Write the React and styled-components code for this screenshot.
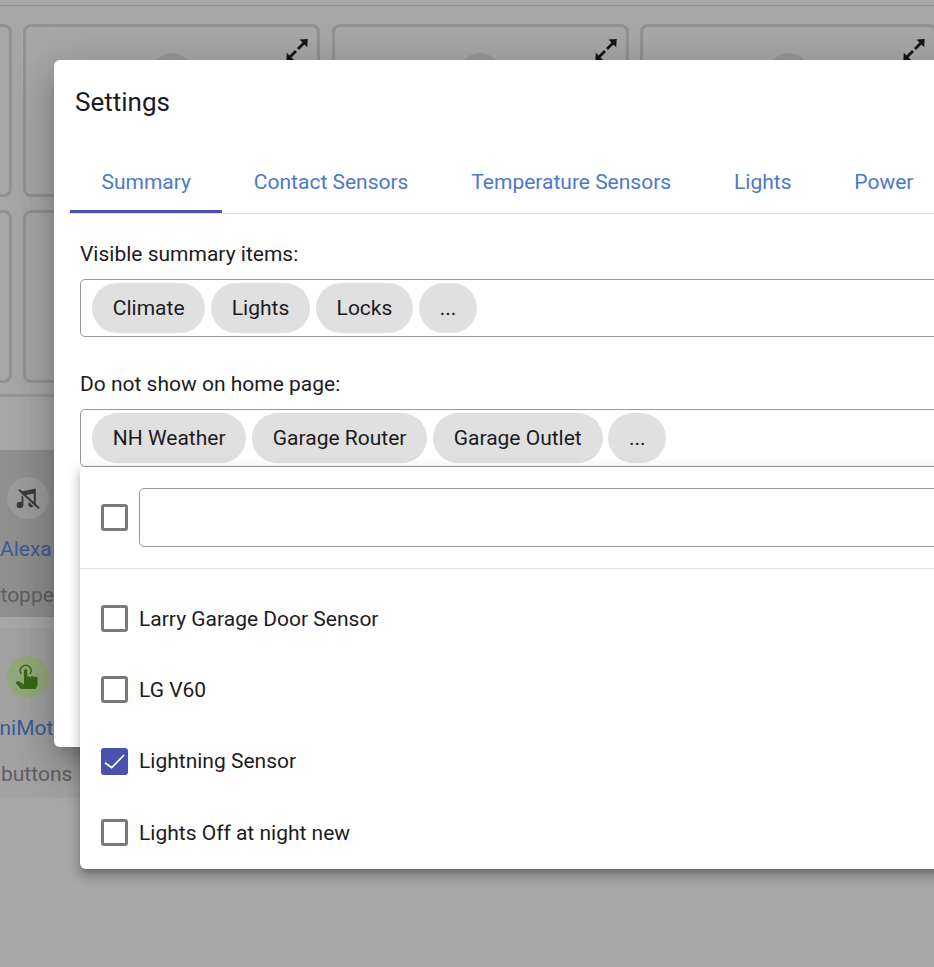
import React from "react";
import styled, { createGlobalStyle } from "styled-components";

const GlobalStyle = createGlobalStyle`
  html, body { margin: 0; padding: 0; overflow: hidden; }
  body { font-family: Roboto, "Liberation Sans", sans-serif; }
`;

const Page = styled.div`
  position: relative;
  width: 934px;
  height: 967px;
  overflow: hidden;
  background: #a7a7a7;
`;

const TopBar = styled.div`
  height: 5px;
  border-bottom: 1px solid #8f8f8f;
`;

const TileGrid = styled.div`
  display: grid;
  grid-template-columns: repeat(4, 297px);
  grid-auto-rows: 173px;
  gap: 13px 11.5px;
  margin: 18px 0 0 -285.5px;
  padding-bottom: 11px;
  border-bottom: 3px solid #979797;
`;

const Tile = styled.div`
  position: relative;
  box-sizing: border-box;
  border: 3px solid #929292;
  border-radius: 8px;
`;

const TileCircle = styled.div`
  position: absolute;
  top: 26px;
  left: 50%;
  width: 42px;
  height: 42px;
  margin-left: -21px;
  border-radius: 50%;
  background: #989898;
`;

const ExpandIcon = styled.svg`
  position: absolute;
  top: 11px;
  right: 8px;
  width: 24px;
  height: 24px;
  color: #141414;
`;

const DeviceRows = styled.div`
  display: flex;
  flex-direction: column;
  gap: 11px;
  margin-top: 53px;
  width: 200px;
`;

const DeviceRow = styled.div`
  box-sizing: border-box;
  height: ${(p) => p.$height}px;
  padding-top: ${(p) => p.$pad}px;
  background: ${(p) => p.$bg};
  overflow: hidden;
  white-space: nowrap;
`;

const DeviceIcon = styled.div`
  margin-left: 7px;
  width: 42px;
  height: 42px;
  border-radius: 50%;
  background: ${(p) => p.$bg};
  display: flex;
  align-items: center;
  justify-content: center;
`;

const IconSvg = styled.svg`
  width: 28px;
  height: 28px;
  flex: none;
`;

const DeviceName = styled.div`
  margin: 16px 0 0 ${(p) => p.$left}px;
  font-size: 21px;
  line-height: 28px;
  color: #3c5b96;
`;

const DeviceState = styled.div`
  margin: 18px 0 0 ${(p) => p.$left}px;
  font-size: 21px;
  line-height: 28px;
  color: #5f5f64;
`;

const Dialog = styled.div`
  position: absolute;
  left: 54px;
  top: 60px;
  width: 960px;
  height: 687px;
  box-sizing: border-box;
  background: #fff;
  border-radius: 6px;
  box-shadow: 0 11px 15px -7px rgba(0,0,0,.2), 0 24px 38px 3px rgba(0,0,0,.14), 0 9px 46px 8px rgba(0,0,0,.12);
`;

const DialogTitle = styled.h2`
  margin: 0;
  padding: 26px 21px 0;
  font-size: 26px;
  line-height: 32px;
  font-weight: 400;
  color: #1c1b1f;
`;

const TabBar = styled.div`
  display: flex;
  margin: 36px 0 0 16px;
  height: 60px;
  box-sizing: border-box;
  border-bottom: 1px solid #e0e0e0;
`;

const TabItem = styled.div`
  box-sizing: border-box;
  height: 59px;
  padding: 0 31.45px;
  display: flex;
  align-items: center;
  font-size: 21px;
  color: #4d78c9;
  white-space: nowrap;
  border-bottom: 3px solid ${(p) => (p.$active ? "#4a52ad" : "transparent")};
`;

const FieldList = styled.div`
  display: flex;
  flex-direction: column;
  gap: 33px;
  padding: 26px 0 0 26px;
`;

const FieldLabel = styled.div`
  font-size: 21px;
  line-height: 28px;
  color: #1c1b1f;
  margin-bottom: 11px;
`;

const ChipBox = styled.div`
  box-sizing: border-box;
  height: 58px;
  border: 1px solid #999;
  border-radius: 5px;
  padding: 3px 11px;
  display: flex;
  align-items: center;
  gap: 5.7px;
`;

const Chip = styled.div`
  height: 50px;
  border-radius: 25px;
  background: #e0e0e0;
  padding: 0 20.8px;
  display: flex;
  align-items: center;
  font-size: 21px;
  color: #1c1b1f;
  white-space: nowrap;
`;

const Popup = styled.div`
  position: absolute;
  left: 80px;
  top: 467px;
  width: 900px;
  height: 402px;
  box-sizing: border-box;
  background: #fff;
  border-radius: 0 0 6px 6px;
  box-shadow: 0 5px 5px -3px rgba(0,0,0,.2), 0 8px 10px 1px rgba(0,0,0,.14), 0 3px 14px 2px rgba(0,0,0,.12);
`;

const FilterRow = styled.div`
  display: flex;
  align-items: center;
  gap: 11px;
  height: 102px;
  padding-left: 21px;
  box-sizing: border-box;
  border-bottom: 1px solid #e0e0e0;
`;

const FilterInput = styled.div`
  flex: 1;
  height: 59px;
  box-sizing: border-box;
  border: 1px solid #999;
  border-radius: 5px;
`;

const OptionList = styled.div`
  display: flex;
  flex-direction: column;
  padding-top: 14px;
`;

const OptionRow = styled.div`
  display: flex;
  align-items: center;
  gap: 11px;
  height: 71.3px;
  padding-left: 21px;
  font-size: 21px;
  color: #1c1b1f;
`;

const CheckBox = styled.div`
  box-sizing: border-box;
  width: 27px;
  height: 27px;
  flex: none;
  border-radius: 3px;
  border: ${(p) => (p.$checked ? "none" : "3px solid #7a7a7a")};
  background: ${(p) => (p.$checked ? "#4a52ad" : "#fff")};
`;

const CheckMark = styled.svg`
  display: block;
  width: 27px;
  height: 27px;
  fill: none;
  stroke: #fff;
  stroke-width: 1.7;
`;

const Expand = () => (
  <ExpandIcon viewBox="0 0 24 24">
    <path fill="currentColor" d="M22.7 1 14.5 1.5l7.7 7.7zM1.3 23l8.2-.5-7.7-7.7z" />
    <path stroke="currentColor" strokeWidth="2.8" d="M19 5l-6 6M5 19l6-6" />
  </ExpandIcon>
);

const MusicOff = () => (
  <IconSvg viewBox="0 0 28 28">
    <g fill="#3b3b3b">
      <circle cx="6" cy="21" r="3.3" />
      <circle cx="17.3" cy="20.3" r="3" />
      <path d="M7.6 21V7.4L21.8 4.4V20.3H19.8V9.4L9.4 11.4V21z" />
    </g>
    <path d="M4 7.2 24 25.5" stroke="#9b9b9b" strokeWidth="1.4" fill="none" />
    <path d="M5 5.8 25 24.2" stroke="#3b3b3b" strokeWidth="1.9" fill="none" />
  </IconSvg>
);

const TouchHand = () => (
  <IconSvg viewBox="0 0 28 28">
    <path d="M7.2 11A5.5 5.5 0 1 1 16.2 11" stroke="#376814" strokeWidth="1.6" fill="none" />
    <path
      fill="#376814"
      d="M10 7.6a1.65 1.65 0 0 1 3.3 0V13.5h2.4l.7 1.6.6-2h2.1l.7 1.9.6-1.2h1.9c.8 0 1.2.6 1.2 1.4V22l-1.6 4H7L1.7 20l1-1.5c1-.6 2.5-.2 3.5.6l3.8 2.4z"
    />
  </IconSvg>
);

const summaryChips = ["Climate", "Lights", "Locks", "..."];
const hiddenChips = ["NH Weather", "Garage Router", "Garage Outlet", "..."];
const options = [
  { label: "Larry Garage Door Sensor" },
  { label: "LG V60" },
  { label: "Lightning Sensor", checked: true },
  { label: "Lights Off at night new" },
];
const tabs = ["Summary", "Contact Sensors", "Temperature Sensors", "Lights", "Power"];

export default function App() {
  return (
    <Page>
      <GlobalStyle />
      <TopBar />
      <TileGrid>
        {[0, 1, 2, 3].map((i) => (
          <Tile key={i}>
            {i > 0 && <TileCircle />}
            {i > 0 && <Expand />}
          </Tile>
        ))}
        {[0, 1, 2, 3].map((i) => (
          <Tile key={i} />
        ))}
      </TileGrid>
      <DeviceRows>
        <DeviceRow $height={167} $pad={27} $bg="#8f8f8f">
          <DeviceIcon $bg="#9c9c9c">
            <MusicOff />
          </DeviceIcon>
          <DeviceName $left={0}>Alexa</DeviceName>
          <DeviceState $left={-12}>Stopped</DeviceState>
        </DeviceRow>
        <DeviceRow $height={170} $pad={28} $bg="#a2a2a2">
          <DeviceIcon $bg="#93a97c">
            <TouchHand />
          </DeviceIcon>
          <DeviceName $left={-24}>MiniMote</DeviceName>
          <DeviceState $left={1}>buttons</DeviceState>
        </DeviceRow>
      </DeviceRows>

      <Dialog>
        <DialogTitle>Settings</DialogTitle>
        <TabBar>
          {tabs.map((t, i) => (
            <TabItem key={t} $active={i === 0}>{t}</TabItem>
          ))}
        </TabBar>
        <FieldList>
          <div>
            <FieldLabel>Visible summary items:</FieldLabel>
            <ChipBox>
              {summaryChips.map((c) => <Chip key={c}>{c}</Chip>)}
            </ChipBox>
          </div>
          <div>
            <FieldLabel>Do not show on home page:</FieldLabel>
            <ChipBox>
              {hiddenChips.map((c) => <Chip key={c}>{c}</Chip>)}
            </ChipBox>
          </div>
        </FieldList>
      </Dialog>

      <Popup>
        <FilterRow>
          <CheckBox />
          <FilterInput />
        </FilterRow>
        <OptionList>
          {options.map((o) => (
            <OptionRow key={o.label}>
              <CheckBox $checked={o.checked}>
                {o.checked && (
                  <CheckMark viewBox="0 0 27 27">
                    <path d="M4 14.7l6.7 5L23 7" />
                  </CheckMark>
                )}
              </CheckBox>
              {o.label}
            </OptionRow>
          ))}
        </OptionList>
      </Popup>
    </Page>
  );
}
